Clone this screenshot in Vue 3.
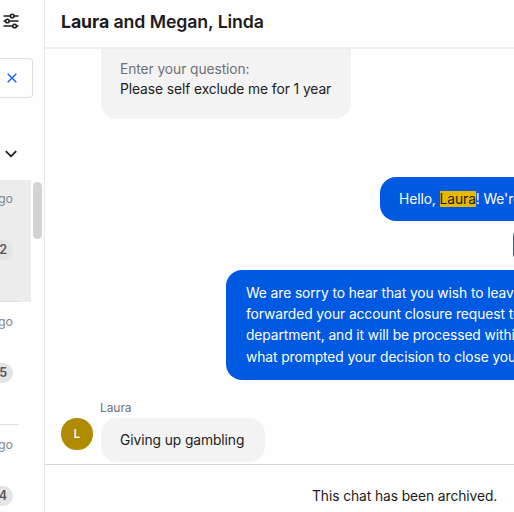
<script setup>
const chats = [
  { time: 'ago', count: '2', active: true },
  { time: 'ago', count: '5', active: false },
  { time: 'ago', count: '4', active: false },
]
const reply = [
  'We are sorry to hear that you wish to leave',
  'forwarded your account closure request to',
  'department, and it will be processed within',
  'what prompted your decision to close your',
]
</script>

<template>
  <div class="app">
    <aside class="sidebar">
      <div class="tools">
        <svg class="filter" width="16" height="16" viewBox="0 0 16 16" fill="none" stroke="#1b1b20" stroke-width="1.6">
          <path d="M.5 3h7M11 3h4.5M.5 8h2M6.3 8h9.2M.5 13h9.2M13.5 13h2" />
          <circle cx="9.2" cy="3" r="1.8" />
          <circle cx="4.4" cy="8" r="1.8" />
          <circle cx="11.6" cy="13" r="1.8" />
        </svg>
      </div>
      <div class="search">
        <svg width="10" height="10" viewBox="0 0 10 10" fill="none" stroke="#1668e3" stroke-width="1.5">
          <path d="M.7.7l8.6 8.6M9.3.7L.7 9.3" />
        </svg>
      </div>
      <div class="sort">
        <svg width="12" height="8" viewBox="0 0 12 8" fill="none" stroke="#1b1b20" stroke-width="1.8">
          <path d="M.8 1.2L6 6.3l5.2-5.1" />
        </svg>
      </div>
      <div class="list">
        <div class="chats">
          <div v-for="(chat, i) in chats" :key="i" class="chat" :class="{ active: chat.active }">
            <span class="time">{{ chat.time }}</span>
            <span class="count">{{ chat.count }}</span>
            <i class="divider"></i>
          </div>
        </div>
        <div class="track"><div class="thumb"></div></div>
      </div>
    </aside>

    <main class="main">
      <header class="header"><span><b>Laura</b> and Megan, Linda</span></header>
      <section class="feed">
        <div class="bubble form">
          <div class="question">Enter your question:</div>
          <div>Please self exclude me for 1 year</div>
        </div>
        <div class="bubble agent hello">Hello, <mark>Laura</mark>! We're</div>
        <div class="choice"></div>
        <div class="bubble agent reply">
          <div v-for="line in reply" :key="line">{{ line }}</div>
        </div>
        <div class="author">Laura</div>
        <div class="row">
          <div class="avatar">L</div>
          <div class="bubble visitor">Giving up gambling</div>
        </div>
      </section>
      <footer class="footer">This chat has been archived.</footer>
    </main>
  </div>
</template>

<style>
html, body { margin: 0; overflow: hidden; background: #fff; }
</style>

<style scoped>
.app {
  display: flex;
  width: 514px;
  height: 512px;
  overflow: hidden;
  background: #fefefe;
  color: #1b1b20;
  font: 13.8px/21.33px Inter, sans-serif;
  letter-spacing: -0.08px;
}
.app * { box-sizing: border-box; }
svg { display: block; }
.sidebar {
  flex: 0 0 45px;
  display: flex;
  flex-direction: column;
  overflow: hidden;
  border-right: 1px solid #e6e7e9;
}
.tools { flex: 0 0 58px; padding: 13px 0 0 3px; }
.search {
  flex: 0 0 40px;
  width: 33px;
  display: flex;
  align-items: center;
  padding-left: 7px;
  border: 1px solid #dcdfe4;
  border-left: 0;
  border-radius: 0 4px 4px 0;
}
.sort { flex: 0 0 82px; padding: 52px 0 0 5px; }
.list { flex: 1; display: flex; min-height: 0; }
.chats { width: 31px; }
.chat {
  height: 123px;
  display: flex;
  flex-direction: column;
  align-items: flex-end;
  padding: 11px 18px 0 0;
  position: relative;
}
.active { background: #ececec; height: 122px; }
.chat + .chat { padding-top: 12px; }
.time { font-size: 12.5px; line-height: 16px; color: #858a94; white-space: nowrap; }
.count {
  margin-top: 33px;
  width: 30px;
  height: 20px;
  flex: none;
  padding-right: 6px;
  border-radius: 10px;
  background: #e4e4e5;
  color: #54545d;
  font-size: 12.5px;
  font-weight: 600;
  line-height: 20px;
  text-align: right;
}
.divider { position: absolute; left: 0; right: 12px; bottom: 0; height: 1px; background: #dde1e6; }
.track { padding: 2px 0 0 2px; }
.thumb { width: 9px; height: 57px; border-radius: 5px; background: #d2d3d5; }
.main { flex: 1; min-width: 0; display: flex; flex-direction: column; }
.header {
  flex: 0 0 49px;
  padding: 9px 0 0 16px;
  border-bottom: 2px solid #eeeeef;
  font-size: 17.7px;
  font-weight: 600;
  line-height: 25px;
}
.header b { font-weight: 700; }
.feed {
  flex: 0 0 415px;
  display: flex;
  flex-direction: column;
  align-items: flex-start;
  overflow: hidden;
}
.bubble { flex: none; border-radius: 16px; background: #f3f3f3; white-space: nowrap; }
.form {
  width: 250px;
  height: 69.5px;
  margin-left: 56px;
  padding: 10px 19px;
  border-radius: 0 0 16px 16px;
  line-height: 20px;
}
.question { color: #6e717b; }
.agent { background: #0059e1; color: #fff; }
.hello { width: 250px; height: 44.5px; margin: 58px 0 0 335px; padding: 12px 19px; }
mark { background: #e6b800; color: #1b1b20; }
.choice {
  flex: none;
  width: 120px;
  height: 30px;
  margin: 9px 0 0 468px;
  border: 1px solid #34619f;
  border-radius: 6px;
}
.reply { width: 440px; height: 109.5px; margin: 10px 0 0 181px; padding: 12.7px 20px; }
.author { margin: 20px 0 0 55px; font-size: 12px; line-height: 16px; color: #6e717b; }
.row { display: flex; align-items: flex-start; margin: 2.5px 0 0 16px; }
.avatar {
  width: 31.5px;
  height: 31.5px;
  border-radius: 50%;
  background: #b08b00;
  color: #fff;
  font-size: 12px;
  font-weight: 500;
  line-height: 31px;
  text-align: center;
}
.visitor { width: 164px; height: 44px; margin-left: 8px; padding: 12px 19.5px; }
.footer { flex: 1; padding: 21px 0 0 267px; border-top: 1px solid #d5d5d6; white-space: nowrap; }
</style>
